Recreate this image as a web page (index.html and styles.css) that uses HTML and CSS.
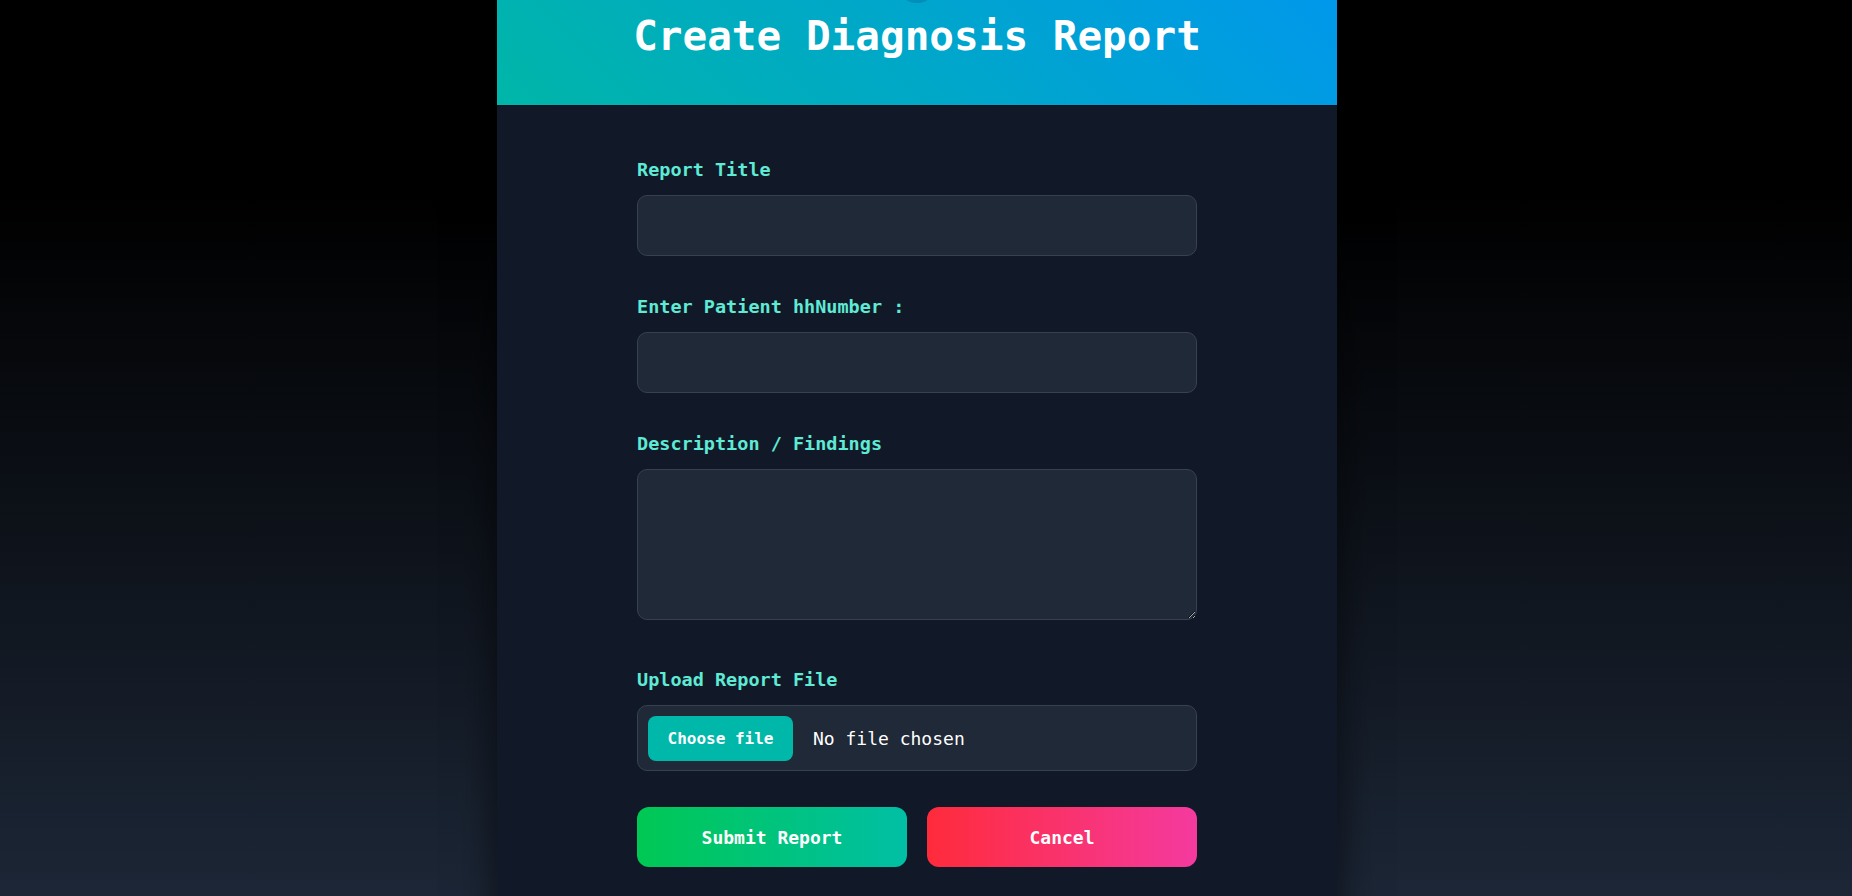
FILE: index.html
```html
<!DOCTYPE html>
<html lang="en">
<head>
<meta charset="utf-8">
<title>Create Diagnosis Report</title>
<link rel="stylesheet" href="styles.css">
</head>
<body>
<div class="page">
  <main class="card">
    <header class="card-header">
      <div class="header-icon"></div>
      <h1 class="title">Create Diagnosis Report</h1>
    </header>
    <form class="form">
      <div class="field">
        <label class="label" for="report-title">Report Title</label>
        <input class="input" id="report-title" type="text">
      </div>
      <div class="field">
        <label class="label" for="hh-number">Enter Patient hhNumber :</label>
        <input class="input" id="hh-number" type="text">
      </div>
      <div class="field field--tall">
        <label class="label" for="description">Description / Findings</label>
        <textarea class="input textarea" id="description"></textarea>
      </div>
      <div class="field field--file">
        <label class="label" for="report-file">Upload Report File</label>
        <label class="file-box" for="report-file">
          <input class="file-native" id="report-file" type="file">
          <span class="file-btn">Choose file</span>
          <span class="file-name">No file chosen</span>
        </label>
      </div>
      <div class="actions">
        <button type="button" class="btn btn--submit">Submit Report</button>
        <button type="button" class="btn btn--cancel">Cancel</button>
      </div>
    </form>
  </main>
</div>
</body>
</html>
```

FILE: styles.css
```css
html, body {
  height: 100%;
  margin: 0;
}

body {
  background: linear-gradient(180deg, #000 0%, #000 22%, #1c2636 100%);
  overflow: hidden;
  font-family: "DejaVu Sans Mono", monospace;
}

.page {
  display: flex;
  justify-content: center;
  padding-right: 18px;
}

.card {
  width: 840px;
  margin-top: -59px;
  min-height: 1100px;
  background: #111827;
  box-shadow: 0 0 40px rgba(0, 0, 0, 0.6);
}

.card-header {
  padding: 20px 0 45px;
  background: linear-gradient(45deg, #00b6a8, #0096ef);
  border-bottom: 1px solid #0b1020;
  text-align: center;
}

.header-icon {
  width: 42px;
  height: 42px;
  margin: 0 auto 9px;
  border-radius: 50%;
  background: rgba(0, 60, 120, 0.22);
}

.title {
  margin: 0;
  font-size: 41px;
  line-height: 48px;
  font-weight: bold;
  color: #ffffff;
}

.form {
  padding: 53px 140px 40px;
}

.field {
  margin-bottom: 40px;
}

.field--tall {
  margin-bottom: 49px;
}

.field--file {
  margin-bottom: 36px;
}

.label {
  display: block;
  margin-bottom: 14px;
  font-size: 18.5px;
  line-height: 22px;
  font-weight: bold;
  color: #5eead4;
}

.input {
  display: block;
  width: 100%;
  height: 61px;
  box-sizing: border-box;
  padding: 0 16px;
  background: #1f2937;
  border: 1px solid #374151;
  border-radius: 10px;
  color: #ffffff;
  font-family: "DejaVu Sans Mono", monospace;
  font-size: 18px;
  outline: none;
}

.textarea {
  height: 151px;
  padding: 12px 16px;
  resize: vertical;
}

.file-box {
  display: flex;
  align-items: center;
  gap: 20px;
  height: 66px;
  box-sizing: border-box;
  padding: 0 10px;
  background: #1f2937;
  border: 1px solid #374151;
  border-radius: 10px;
  cursor: pointer;
}

.file-native {
  display: none;
}

.file-btn {
  display: flex;
  align-items: center;
  justify-content: center;
  width: 145px;
  height: 45px;
  border-radius: 8px;
  background: #00b8a9;
  color: #ffffff;
  font-size: 16px;
  font-weight: bold;
}

.file-name {
  color: #ffffff;
  font-size: 18px;
}

.actions {
  display: flex;
  gap: 20px;
}

.btn {
  flex: 1;
  height: 60px;
  border: 0;
  border-radius: 12px;
  color: #ffffff;
  font-family: "DejaVu Sans Mono", monospace;
  font-size: 18px;
  font-weight: bold;
}

.btn--submit {
  background: linear-gradient(90deg, #00c853, #00bfa5);
}

.btn--cancel {
  background: linear-gradient(90deg, #ff2b3b, #f43a9f);
}
```
